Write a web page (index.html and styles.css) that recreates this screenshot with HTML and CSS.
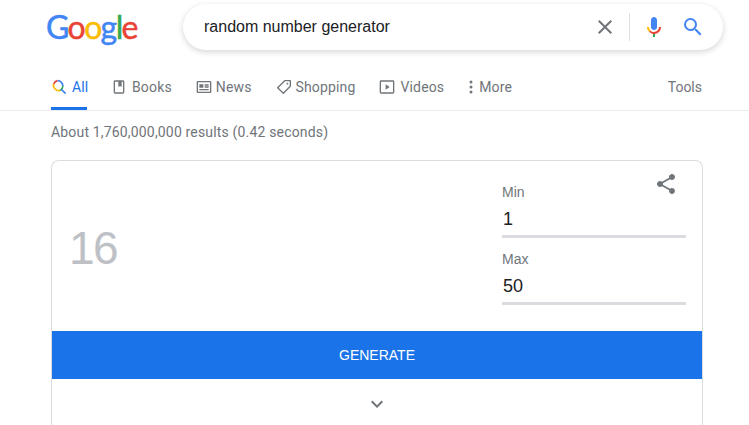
FILE: index.html
```html
<!DOCTYPE html>
<html lang="en">
<head>
<meta charset="utf-8">
<title>random number generator - Google Search</title>
<link rel="stylesheet" href="styles.css">
</head>
<body>
<header class="top">
  <div class="logo"><span class="b">G</span><span class="r">o</span><span class="y">o</span><span class="b">g</span><span class="g">l</span><span class="r">e</span></div>
  <div class="search">
    <span class="query">random number generator</span>
    <svg class="x" width="24" height="24" viewBox="0 0 24 24"><path fill="#70757a" d="M19 6.41 17.59 5 12 10.59 6.41 5 5 6.41 10.59 12 5 17.59 6.41 19 12 13.41 17.59 19 19 17.59 13.41 12z"/></svg>
    <span class="sep"></span>
    <svg class="mic" width="24" height="24" viewBox="0 0 24 24"><path fill="#4285f4" d="M12 15c1.66 0 3-1.31 3-2.97V5c0-1.66-1.34-3-3-3S9 3.34 9 5v7.03C9 13.69 10.34 15 12 15z"/><path fill="#34a853" d="M11 18.08h2V22h-2z"/><path fill="#fbbc05" d="M7.05 16.87c-1.27-1.33-2.05-2.8-2.05-4.87h2c0 1.45.56 2.42 1.47 3.38l-1.42 1.49z"/><path fill="#ea4335" d="M12 16.93c-1.5 0-2.67-.36-3.53-1.55l-1.42 1.49C8.2 18.1 9.9 19 12 19c4 0 7-3.1 7-7h-2c0 2.8-2.2 4.93-5 4.93z"/></svg>
    <svg class="lens" width="24" height="24" viewBox="0 0 24 24"><path fill="#4285f4" d="M15.5 14h-.79l-.28-.27A6.47 6.47 0 0 0 16 9.5 6.5 6.5 0 1 0 9.5 16c1.61 0 3.09-.59 4.23-1.57l.27.28v.79l5 4.99L20.49 19l-4.99-5zm-6 0C7.01 14 5 11.99 5 9.5S7.01 5 9.5 5 14 7.01 14 9.5 11.99 14 9.5 14z"/></svg>
  </div>
</header>

<nav class="tabs">
  <a class="tab active">
    <svg width="16" height="16" viewBox="0 0 24 24" fill="none" stroke-width="2.6"><path stroke="#ea4335" d="M4 7.5A8 8 0 0 1 10 2.5"/><path stroke="#4285f4" d="M10 2.5a8 8 0 0 1 7.8 8"/><path stroke="#34a853" d="M17.8 10.5a8 8 0 0 1-4 6.6"/><path stroke="#fbbc05" d="M13.8 17.1A8 8 0 0 1 4 7.5"/><path stroke="#4285f4" d="m15.5 15.5 6.5 6.5"/></svg>
    All
  </a>
  <a class="tab">
    <svg width="16" height="16" viewBox="0 0 24 24"><path fill="#70757a" fill-rule="evenodd" d="M6 2h12a2 2 0 0 1 2 2v16a2 2 0 0 1-2 2H6a2 2 0 0 1-2-2V4a2 2 0 0 1 2-2zm0 2v16h12V4h-2v8l-2.500-1.500L11 12V4z"/></svg>
    Books
  </a>
  <a class="tab tight">
    <svg width="16" height="16" viewBox="0 0 24 24"><path fill="#70757a" fill-rule="evenodd" d="M3 3h18a2 2 0 0 1 2 2v14a2 2 0 0 1-2 2H3a2 2 0 0 1-2-2V5a2 2 0 0 1 2-2zm0 2v14h18V5zm2 3h6v5H5zm8 0h6v2h-6zm0 3h6v2h-6zm-8 4h14v2H5z"/></svg>
    News
  </a>
  <a class="tab tight">
    <svg width="16" height="16" viewBox="0 0 24 24" fill="none" stroke="#70757a" stroke-width="2"><path stroke-linejoin="round" d="M13 2.500h8.500v8.500L11 21.500 2.500 13z"/><circle cx="17" cy="7" r="1.300" fill="#70757a" stroke="none"/></svg>
    Shopping
  </a>
  <a class="tab">
    <svg width="16" height="16" viewBox="0 0 24 24"><path fill="#70757a" fill-rule="evenodd" d="M3 2h18a2 2 0 0 1 2 2v16a2 2 0 0 1-2 2H3a2 2 0 0 1-2-2V4a2 2 0 0 1 2-2zm0 2v16h18V4zm7 4 6 4-6 4z"/></svg>
    Videos
  </a>
  <a class="tab more">
    <svg width="4" height="16" viewBox="0 0 4 16"><g fill="#70757a"><circle cx="2" cy="3" r="1.500"/><circle cx="2" cy="8" r="1.500"/><circle cx="2" cy="13" r="1.500"/></g></svg>
    More
  </a>
  <a class="tab tools">Tools</a>
</nav>

<p class="stats">About 1,760,000,000 results (0.42 seconds)</p>

<section class="card">
  <div class="panel">
    <div class="result">16</div>
    <div class="fields">
      <label class="field"><span class="lbl">Min</span><span class="val">1</span></label>
      <label class="field"><span class="lbl">Max</span><span class="val">50</span></label>
    </div>
    <svg class="share" width="24" height="24" viewBox="0 0 24 24"><path fill="#70757a" d="M18 16.080c-.76 0-1.440.300-1.960.770L8.910 12.700c.050-.230.090-.460.090-.700s-.040-.470-.090-.700l7.050-4.110c.540.500 1.250.810 2.040.810 1.660 0 3-1.340 3-3s-1.340-3-3-3-3 1.340-3 3c0 .240.040.470.090.700L8.040 9.810C7.500 9.310 6.790 9 6 9c-1.660 0-3 1.340-3 3s1.340 3 3 3c.790 0 1.500-.310 2.040-.810l7.120 4.160c-.050.210-.080.430-.080.650 0 1.610 1.310 2.920 2.920 2.920s2.920-1.310 2.920-2.920-1.310-2.920-2.920-2.920z"/></svg>
  </div>
  <button class="generate">GENERATE</button>
  <div class="expand">
    <svg width="24" height="24" viewBox="0 0 24 24"><path fill="#70757a" d="M16.590 8.590 12 13.170 7.410 8.590 6 10l6 6 6-6z"/></svg>
  </div>
</section>
</body>
</html>
```

FILE: styles.css
```css
html, body { margin: 0; padding: 0; background: #fff; }
body { width: 749px; height: 425px; overflow: hidden; font-family: Roboto, "Liberation Sans", sans-serif; color: #70757a; }

.top { display: flex; align-items: center; padding: 4px 26px 0 46px; height: 46px; }
.logo { width: 137px; font-family: Lato, sans-serif; font-size: 32px; font-weight: 400; -webkit-text-stroke: .5px; letter-spacing: -1.600px; line-height: 46px; }
.logo .b { color: #4285f4; }
.logo .r { color: #ea4335; }
.logo .y { color: #fbbc05; }
.logo .g { color: #34a853; }

.search { flex: 1; height: 46px; box-sizing: border-box; display: flex; align-items: center; padding: 0 18px 0 21px; border-radius: 23px; background: #fff; box-shadow: 0 2px 5px 1px rgba(64,60,67,.16); }
.query { flex: 1; font-family: "Liberation Sans", sans-serif; font-size: 16px; color: #202124; }
.x { margin-right: 12px; }
.sep { width: 1px; height: 28px; background: #dfe1e5; margin-right: 12px; }
.mic { margin-right: 15px; }

.tabs { display: flex; align-items: flex-start; height: 61px; box-sizing: border-box; padding: 0 47px 0 51px; border-bottom: 1px solid #ebebeb; }
.tab { display: flex; align-items: center; gap: 5px; height: 57px; box-sizing: border-box; padding-top: 17px; margin-right: 24px; font-size: 14px; letter-spacing: .15px; line-height: 40px; white-space: nowrap; }
.tab svg { flex: none; }
.tab.tight { gap: 4px; }
.tab.active { width: 36px; color: #1a73e8; border-bottom: 3px solid #1a73e8; height: 60px; }
.tab.more { gap: 6px; }
.tab.more svg { margin-left: 1px; }
.tab.tools { margin: 0 0 0 auto; letter-spacing: 0; }

.stats { margin: 0; padding: 13px 0 0 51px; font-size: 14px; letter-spacing: .17px; line-height: 16px; height: 36px; }

.card { margin: 0 46px 0 51px; height: 265px; box-sizing: border-box; border: 1px solid #dadce0; border-bottom: 0; border-radius: 8px 8px 0 0; overflow: hidden; position: relative; }
.panel { height: 170px; box-sizing: border-box; display: flex; align-items: flex-start; justify-content: space-between; padding: 0 16px 0 17px; }
.result { font-family: "Liberation Sans", sans-serif; font-size: 46px; letter-spacing: -1.500px; line-height: 56px; color: #bdc1c6; margin-top: 59px; }
.fields { width: 184px; display: flex; flex-direction: column; gap: 13px; padding-top: 23px; }
.field { display: block; border-bottom: 3px solid #dadce0; }
.lbl { display: block; font-family: "Liberation Sans", sans-serif; font-size: 14px; line-height: 16px; color: #70757a; }
.val { display: block; font-family: "Liberation Sans", sans-serif; font-size: 18px; line-height: 24px; padding: 7px 0 4px 1px; color: #202124; }
.share { position: absolute; top: 11px; right: 24px; }

.generate { display: block; width: 100%; height: 48px; border: 0; background: #1a73e8; color: #fff; font-family: "Liberation Sans", sans-serif; font-size: 14px; padding: 0; }
.expand { display: flex; justify-content: center; padding-top: 13px; }
```
